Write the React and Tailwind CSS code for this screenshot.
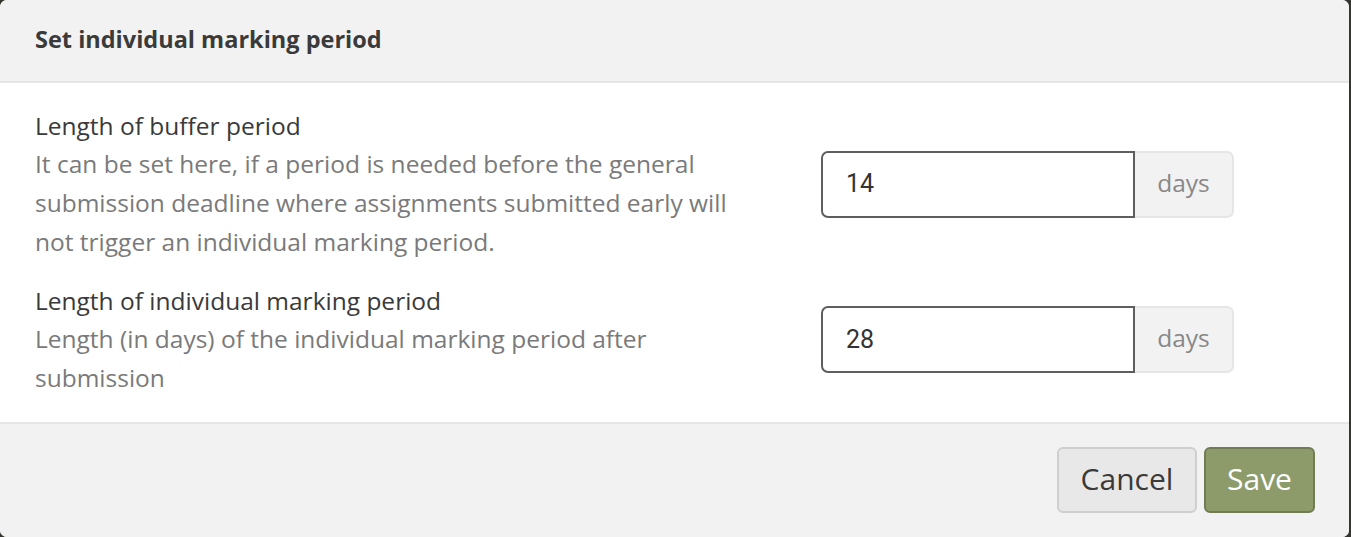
export default function App() {
  const font = { fontFamily: '"Open Sans", "Noto Sans", sans-serif' };
  return (
    <div className="w-[1351px] h-[537px] bg-[#34352f] overflow-hidden" style={font}>
      <div className="w-[1349px] h-[537px] rounded-[7px] overflow-hidden flex flex-col bg-white">
        <div className="h-[83px] shrink-0 bg-[#f2f2f2] border-b-2 border-[#e6e6e6] flex items-center px-[35px] pb-[3px]">
          <h1 className="text-[23.5px] font-bold text-[#3a3a3a] leading-[32px]">Set individual marking period</h1>
        </div>
        <div className="flex-1 flex flex-col gap-[21px] px-[35px] pt-[24px]">
          <Row
            label="Length of buffer period"
            desc="It can be set here, if a period is needed before the general submission deadline where assignments submitted early will not trigger an individual marking period."
            value="14"
          />
          <Row
            label="Length of individual marking period"
            desc="Length (in days) of the individual marking period after submission"
            value="28"
          />
        </div>
        <div className="h-[115px] shrink-0 bg-[#f2f2f2] border-t-2 border-[#e6e6e6] flex items-center justify-end gap-[7px] pr-[34px] pb-[1px]">
          <button className="w-[140px] h-[66px] rounded-[6px] bg-[#e8e8e8] border-2 border-[#cfcfcf] text-[#3a3a3a] text-[30px] leading-none pb-[2px]">Cancel</button>
          <button className="w-[111px] h-[66px] rounded-[6px] bg-[#8d9b6a] border-2 border-[#717c55] text-white text-[30px] leading-none pb-[2px]">Save</button>
        </div>
      </div>
    </div>
  );
}

function Row({ label, desc, value }) {
  return (
    <div className="flex items-center">
      <div className="w-[725px] shrink-0 text-[24.5px]">
        <div className="text-[#3a3a3a] leading-[37px]">{label}</div>
        <div className="text-[#7a7a7a] leading-[39px]">{desc}</div>
      </div>
      <div className="ml-[61px] flex h-[67px]">
        <div className="w-[314px] h-full border-2 border-[#5e5e5e] rounded-l-[7px] bg-white flex items-center pl-[23px] text-[25px] text-[#333]" style={{ fontFamily: 'Roboto, sans-serif' }}>
          {value}
        </div>
        <div className="w-[99px] h-full bg-[#f2f2f2] border-2 border-l-0 border-[#e6e6e6] rounded-r-[7px] flex items-center justify-center text-[24.5px] text-[#888] pb-[2px]">
          days
        </div>
      </div>
    </div>
  );
}
